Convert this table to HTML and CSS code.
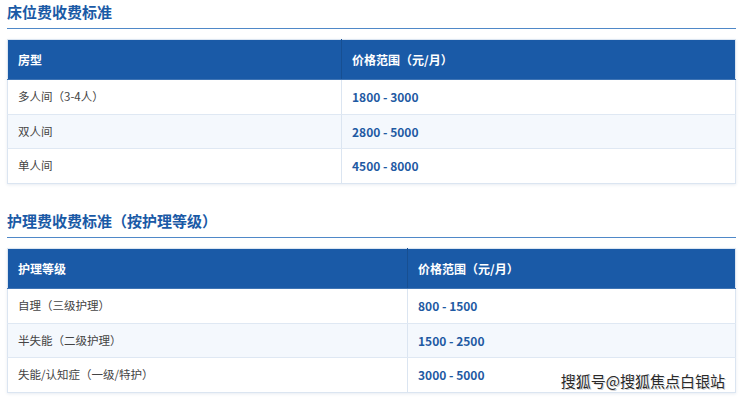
FILE: index.html
```html
<!DOCTYPE html>
<html lang="zh-CN">
<head>
<meta charset="utf-8">
<title>收费标准</title>
<link rel="stylesheet" href="styles.css">
</head>
<body>
<div class="page">
  <section class="section">
    <h2 class="title">床位费收费标准</h2>
    <table class="fee-table">
      <colgroup><col class="c1a"><col></colgroup>
      <thead>
        <tr><th>房型</th><th>价格范围（元/月）</th></tr>
      </thead>
      <tbody>
        <tr><td>多人间（3-4人）</td><td class="price">1800 - 3000</td></tr>
        <tr><td>双人间</td><td class="price">2800 - 5000</td></tr>
        <tr><td>单人间</td><td class="price">4500 - 8000</td></tr>
      </tbody>
    </table>
  </section>
  <section class="section second">
    <h2 class="title">护理费收费标准（按护理等级）</h2>
    <table class="fee-table">
      <colgroup><col class="c1b"><col></colgroup>
      <thead>
        <tr><th>护理等级</th><th>价格范围（元/月）</th></tr>
      </thead>
      <tbody>
        <tr><td>自理（三级护理）</td><td class="price">800 - 1500</td></tr>
        <tr><td>半失能（二级护理）</td><td class="price">1500 - 2500</td></tr>
        <tr><td>失能/认知症（一级/特护）</td><td class="price">3000 - 5000</td></tr>
      </tbody>
    </table>
  </section>
  <div class="watermark">搜狐号@搜狐焦点白银站</div>
</div>
</body>
</html>
```

FILE: styles.css
```css
* { box-sizing: border-box; }
html, body {
  margin: 0;
  padding: 0;
  background: #ffffff;
}
body {
  font-family: "Noto Sans CJK SC", "Noto Sans", sans-serif;
  color: #444444;
}
.page {
  position: relative;
  width: 740px;
  height: 398px;
  padding: 0 4px 0 7px;
  overflow: hidden;
}
.section.second {
  margin-top: 25px;
}
.title {
  margin: 0 0 10px 0;
  font-size: 15px;
  line-height: 23px;
  font-weight: 700;
  color: #1a5aa6;
  padding-bottom: 5px;
  border-bottom: 1px solid #4f88c8;
}
.fee-table {
  width: 729px;
  border-collapse: collapse;
  table-layout: fixed;
  border: 1px solid #dbe5f1;
  box-shadow: 0 1px 3px rgba(30, 70, 130, 0.10);
}
.c1a { width: 334px; }
.c1b { width: 400px; }
.fee-table th {
  background: #1a5aa7;
  color: #ffffff;
  font-size: 12px;
  font-weight: 700;
  text-align: left;
  line-height: 14px;
  padding: 12.5px 10px 12.5px 10px;
  border-right: 1px solid #174f92;
  border-bottom: 1px solid #3f74b4;
}
.fee-table th:last-child { border-right: none; }
.fee-table td {
  font-size: 11.5px;
  line-height: 13.67px;
  padding: 10px 10px;
  border-bottom: 1px solid #dfe8f3;
  border-right: 1px solid #dbe5f1;
  color: #444444;
}
.fee-table td:last-child { border-right: none; }
.fee-table tbody tr:nth-child(even) td { background: #f4f8fd; }
.fee-table tbody tr:last-child td { border-bottom: none; }
.fee-table td.price {
  font-size: 12px;
  font-weight: 700;
  color: #1f5aa3;
}
.watermark {
  position: absolute;
  right: 15px;
  top: 371px;
  font-size: 15px;
  line-height: 20px;
  color: #2a2a2a;
  letter-spacing: 0;
  text-shadow: 0 0 2px #ffffff, 0 0 2px #ffffff, 1px 1px 0 #bbbbbb;
}
```
